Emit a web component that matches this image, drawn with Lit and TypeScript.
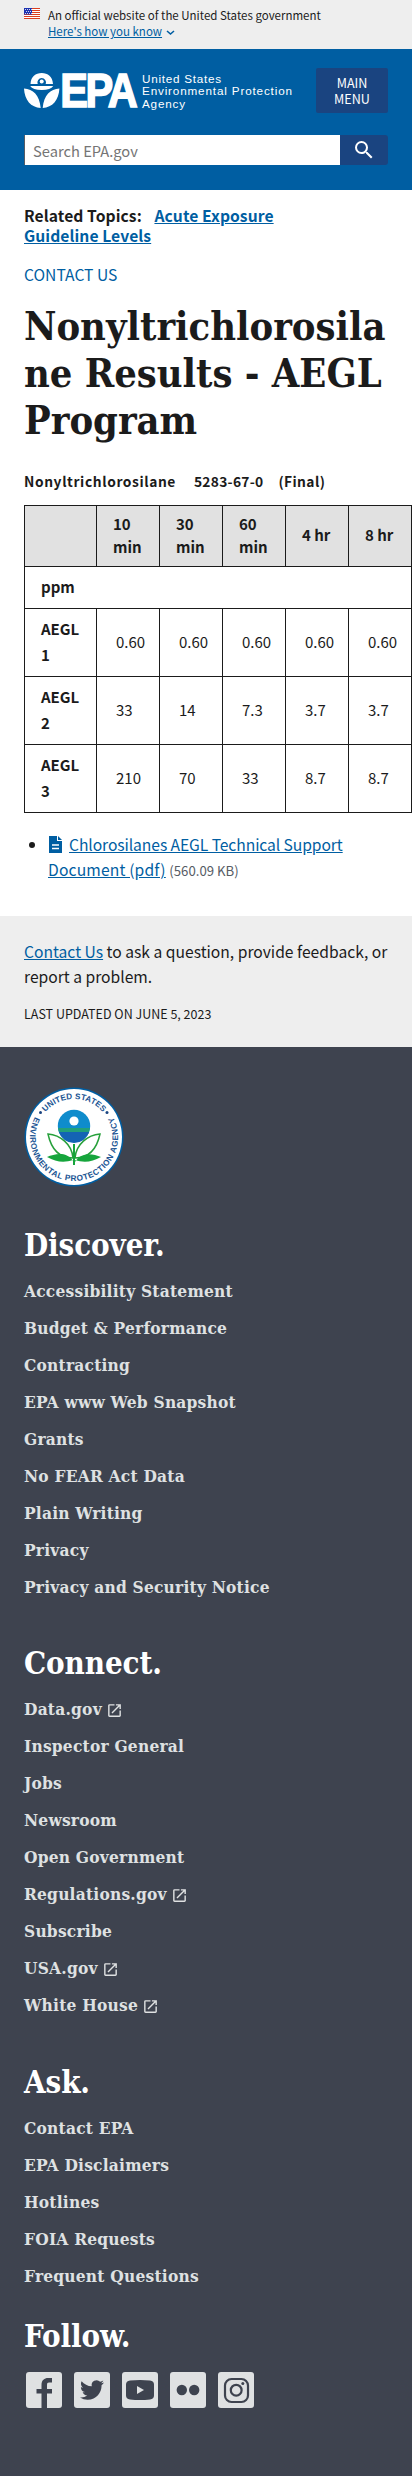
import { LitElement, html, css, svg } from "lit";
import { customElement, property } from "lit/decorators.js";

const DISCOVER = ["Accessibility Statement", "Budget & Performance", "Contracting", "EPA www Web Snapshot", "Grants", "No FEAR Act Data", "Plain Writing", "Privacy", "Privacy and Security Notice"];
const CONNECT = ["Data.gov", "Inspector General", "Jobs", "Newsroom", "Open Government", "Regulations.gov", "Subscribe", "USA.gov", "White House"];
const ASK = ["Contact EPA", "EPA Disclaimers", "Hotlines", "FOIA Requests", "Frequent Questions"];
const EXTERNAL = new Set(["Data.gov", "Regulations.gov", "USA.gov", "White House"]);
const LEVELS: [string, string[]][] = [
  ["1", ["0.60", "0.60", "0.60", "0.60", "0.60"]],
  ["2", ["33", "14", "7.3", "3.7", "3.7"]],
  ["3", ["210", "70", "33", "8.7", "8.7"]],
];

@customElement("footer-links")
export class FooterLinks extends LitElement {
  @property() heading = "";
  @property({ attribute: false }) items: string[] = [];
  static styles = css`
    :host { display: block; font-family: "DejaVu Serif Condensed", "DejaVu Serif", serif; font-stretch: condensed; font-weight: 700; }
    h2 { margin: 0; padding-top: 2px; font-size: 31px; line-height: 40px; color: #fff; letter-spacing: -0.1px; }
    ul { list-style: none; margin: 8px 0 0; padding: 0; }
    li { height: 37px; line-height: 37px; font-size: 17.2px; letter-spacing: .22px; color: #dfe1e2; white-space: nowrap; }
    a { color: inherit; text-decoration: none; }
    svg { width: 17px; height: 17px; fill: #dfe1e2; vertical-align: -4px; margin-left: 4px; }
  `;
  render() {
    return html`<h2>${this.heading}</h2>
      <ul>${this.items.map((t) => html`<li><a>${t}</a>${EXTERNAL.has(t) ? html`<svg viewBox="0 0 24 24"><path d="M19 19H5V5h7V3H5a2 2 0 0 0-2 2v14a2 2 0 0 0 2 2h14c1.1 0 2-.9 2-2v-7h-2v7zM14 3v2h3.59l-9.83 9.83 1.41 1.41L19 6.41V10h2V3h-7z"/></svg>` : ""}</li>`)}</ul>`;
  }
}

@customElement("app-root")
export class AppRoot extends LitElement {
  static styles = css`
    :host { display: block; width: 412px; height: 2476px; overflow: hidden; background: #fff; color: #1b1b1b; font-family: "Noto Sans CJK SC", "Noto Sans CJK JP", sans-serif; font-size: 15.65px; }
    * { box-sizing: border-box; }
    a { color: #005ea2; text-decoration: underline; }
    .banner { height: 49px; background: #eee; padding: 7px 24px 0; display: flex; gap: 8px; font-size: 11.5px; line-height: 16.4px; white-space: nowrap; }
    .flag { width: 16px; height: 11px; margin-top: 1px; display: block; }
    .chev { width: 9px; height: 6px; margin-left: 4px; vertical-align: 0; }
    .header { height: 141px; background: #005ea2; padding: 19px 24px 0; display: flex; flex-direction: column; gap: 22px; }
    .top { display: flex; justify-content: space-between; align-items: flex-start; }
    .logo { width: 272px; height: 42px; margin-top: 2px; overflow: visible; }
    .epa { letter-spacing: -2.8px; }
    .menu { width: 72px; height: 45px; background: #1a4480; color: #fff; text-align: center; font-size: 12.6px; line-height: 16px; padding-top: 7px; border-radius: 2px; }
    .search { display: flex; height: 30px; }
    .box { flex: 1; background: #fff; border: 1px solid #565c65; border-width: 0 0 0 1px; color: #757575; padding-left: 8px; line-height: 31px; font-size: 14.7px; }
    .go { width: 48px; background: #1a4480; display: flex; justify-content: center; align-items: center; border-radius: 0 3px 3px 0; }
    .go svg { width: 24px; height: 24px; fill: #fff; }
    .main { height: 726px; padding: 16px 24px 0; }
    .related { font-weight: 700; line-height: 20px; letter-spacing: .08px; }
    .related a { margin-left: 9px; }
    .related .cont { margin-left: 0; }
    .contact { margin-top: 19px; line-height: 20px; color: #005ea2; }
    h1 { margin: 18px 0 0; font-family: "DejaVu Serif Condensed", "DejaVu Serif", serif; font-stretch: condensed; font-size: 39.5px; line-height: 47px; font-weight: 700; white-space: nowrap; letter-spacing: -0.03px; }
    .cap { display: flex; gap: 18px; font-weight: 700; font-size: 13.8px; line-height: 20px; margin-top: 27px; letter-spacing: .6px; white-space: nowrap; }
    .cap .num { letter-spacing: .25px; margin-right: -3px; }
    .cap .fin { letter-spacing: .4px; }
    table { border-collapse: collapse; table-layout: fixed; width: 388px; margin-top: 14px; }
    th, td { border: 1px solid #1b1b1b; padding: 0 0 1px 16px; text-align: left; font-size: 15px; line-height: 22.5px; }
    thead th { background: #e1e1e1; height: 61px; }
    td { padding-left: 19px; font-weight: 400; }
    tbody tr { height: 68px; }
    tbody th { line-height: 26px; }
    tbody .unit { height: 42px; }
    .list { margin: 19px 0 0; padding: 0 0 0 24px; line-height: 25px; white-space: nowrap; }
    .list li::marker { font-size: 16px; }
    .doc { width: 15px; height: 18px; vertical-align: -3px; margin-right: 6px; }
    .list a { letter-spacing: -.08px; }
    .list .l2 { letter-spacing: .15px; }
    .size { font-size: 13.2px; color: #565c65; }
    .foot { height: 131px; background: #eee; padding: 23px 24px 0; line-height: 25px; white-space: nowrap; }
    .updated { font-size: 12.5px; line-height: 20px; margin-top: 15px; }
    .dark { height: 1429px; background: #3e434f; padding: 40px 24px 0; }
    .seal { width: 100px; height: 100px; display: block; }
    .dark footer-links { margin-top: 35.5px; }
    .dark .c { margin-top: 35px; }
    .dark .a { margin-top: 36px; }
    .dark .f { margin-top: 19px; }
    .social { display: flex; gap: 12px; margin: 16px 0 0 2px; }
    .social svg { width: 36px; height: 36px; }
  `;

  private seal() {
    return svg`<svg class="seal" viewBox="0 0 100 100">
      <defs>
        <path id="upper" d="M12 50a38 38 0 0 1 76 0"/>
        <path id="lower" d="M17.300 20.600 A44 44 0 1 0 82.700 20.600"/>
      </defs>
      <circle cx="50" cy="50" r="49.500" fill="#005ea2"/><circle cx="50" cy="50" r="48" fill="#fff"/>
      <g font-family="Liberation Sans" font-weight="700" font-size="8.200" fill="#205493">
        <text><textPath href="#upper" startOffset="50%" text-anchor="middle" textLength="65">UNITED STATES</textPath></text>
        <text><textPath href="#lower" startOffset="50%" text-anchor="middle" textLength="180">ENVIRONMENTAL PROTECTION AGENCY</textPath></text>
      </g>
      <circle cx="16.500" cy="25.500" r="1.500" fill="#1a4480"/><circle cx="83" cy="25.500" r="1.500" fill="#1a4480"/>
      <circle cx="50" cy="39" r="16.200" fill="#0f8ccc"/>
      <path d="M34 41h32q-1 5-2 6H36q-2-3-2-6z" fill="#22a07a"/>
      <path d="M34.800 45h30.400A16 16 0 0 1 34.800 45z" fill="#1464b4"/>
      <circle cx="50" cy="34" r="4.600" fill="#fff"/>
      <g fill="#fff" stroke="#27a03b" stroke-width="1.500"><path d="M49 71C35 71 27 61 24 47c12 1 24 10 25 24zM51 71c14 0 22-10 25-24-12 1-24 10-25 24z"/></g>
      <path d="M49 57h2v18c7-11 18-8 26-5-9 5-17 6-26 3v5h-2v-5c-9 3-17 2-26-3 8-3 19-6 26 4z" fill="#16a53c"/>
    </svg>`;
  }

  render() {
    return html`
      <div class="banner">
        <svg class="flag" viewBox="0 0 16 11"><rect width="16" height="11" fill="#fff"/><path d="M0 .5h16M0 2.5h16M0 4.5h16M0 6.5h16M0 8.5h16M0 10.5h16" stroke="#db3e1f" stroke-width="1"/><rect width="8" height="6.5" fill="#1e33b1"/><path d="M1 1.5h7M2 3.5h6M1 5.5h7" stroke="#fff" stroke-width=".8" stroke-dasharray="1 1"/></svg>
        <div>An official website of the United States government<br /><a>Here's how you know</a><svg class="chev" viewBox="0 0 9 6"><path d="M1 1l3.5 3L8 1" fill="none" stroke="#005ea2" stroke-width="1.6"/></svg></div>
      </div>
      <div class="header">
        <div class="top">
          <svg class="logo" viewBox="0 0 272 42" fill="#fff">
            <path fill-rule="evenodd" d="M6.500 14C7 6.500 11.500 3 17.700 3S28.500 6.500 29 14h-7.300a4.300 4.300 0 1 0-8 0z"/><circle cx="17.700" cy="11.500" r="2"/>
            <path d="M6.200 16h23q-2.500 4-11.500 4t-11.500-4z"/>
            <path d="M0 18.500c9 .5 15.500 6.500 16.700 19.500C7 37.500 .5 30 0 18.500zM35.400 18.500c-9 .5-15.500 6.500-16.700 19.500 9.700-.5 16.200-8 16.700-19.500z"/>
            <text class="epa" transform="translate(36.300 37.300) scale(.865 1)" font-family="Liberation Sans" font-weight="700" font-size="48" stroke="#fff" stroke-width="1.600">EPA</text>
            <g font-family="Liberation Sans" font-size="11.700"><text x="118" y="12.500" textLength="79">United States</text><text x="118" y="25" textLength="150">Environmental Protection</text><text x="118" y="37.500" textLength="43">Agency</text></g>
          </svg>
          <div class="menu">MAIN<br />MENU</div>
        </div>
        <div class="search"><div class="box">Search EPA.gov</div><div class="go"><svg viewBox="0 0 24 24"><path d="M15.500 14h-.790l-.280-.270A6.471 6.471 0 0 0 16 9.500 6.500 6.500 0 1 0 9.500 16c1.610 0 3.090-.590 4.230-1.570l.270.280v.790l5 4.990L20.490 19l-4.990-5zm-6 0C7.010 14 5 11.990 5 9.500S7.010 5 9.500 5 14 7.010 14 9.500 11.990 14 9.500 14z"/></svg></div></div>
      </div>
      <div class="main">
        <div class="related">Related Topics: <a>Acute Exposure</a><br /><a class="cont">Guideline Levels</a></div>
        <div class="contact">CONTACT US</div>
        <h1>Nonyltrichlorosila<br />ne Results - AEGL<br />Program</h1>
        <div class="cap"><span>Nonyltrichlorosilane</span><span class="num">5283-67-0</span><span class="fin">(Final)</span></div>
        <table>
          <colgroup><col style="width:72px" /><col /><col /><col /><col /><col /></colgroup>
          <thead><tr><th></th><th>10<br />min</th><th>30<br />min</th><th>60<br />min</th><th>4 hr</th><th>8 hr</th></tr></thead>
          <tbody><tr class="unit"><th colspan="6">ppm</th></tr>
          ${LEVELS.map(([n, v]) => html`<tr><th>AEGL<br />${n}</th>${v.map((x) => html`<td>${x}</td>`)}</tr>`)}</tbody>
        </table>
        <ul class="list"><li><svg class="doc" viewBox="0 0 15 18"><path d="M1 0h8v5h5v12H1z" fill="#005ea2"/><path d="M10 0l4 4h-4z" fill="#005ea2"/><path d="M4 9h7M4 12.500h7" stroke="#fff" stroke-width="1.300"/></svg><a>Chlorosilanes AEGL Technical Support</a><br /><a class="l2">Document (pdf)</a> <span class="size">(560.09 KB)</span></li></ul>
      </div>
      <div class="foot"><a>Contact Us</a> to ask a question, provide feedback, or<br />report a problem.<div class="updated">LAST UPDATED ON JUNE 5, 2023</div></div>
      <div class="dark">
        ${this.seal()}
        <footer-links heading="Discover." .items=${DISCOVER}></footer-links>
        <footer-links class="c" heading="Connect." .items=${CONNECT}></footer-links>
        <footer-links class="a" heading="Ask." .items=${ASK}></footer-links>
        <footer-links class="f" heading="Follow."></footer-links>
        <div class="social">
          ${[
            svg`<path d="M15.500 36V21.500h-5V17h5v-4c0-5 3-7 6.500-7h4v4.500h-3c-1.500 0-2 .8-2 2.500v4h5v4.500h-5V36z"/>`,
            svg`<path transform="translate(6 6)" d="M23.953 4.570a10 10 0 01-2.825.775 4.958 4.958 0 002.163-2.723c-.951.555-2.005.959-3.127 1.184a4.920 4.920 0 00-8.384 4.482C7.690 8.095 4.067 6.130 1.640 3.162a4.822 4.822 0 00-.666 2.475c0 1.710.870 3.213 2.188 4.096a4.904 4.904 0 01-2.228-.616v.060a4.923 4.923 0 003.946 4.827 4.996 4.996 0 01-2.212.085 4.936 4.936 0 004.604 3.417 9.867 9.867 0 01-6.102 2.105c-.390 0-.779-.023-1.170-.067a13.995 13.995 0 007.557 2.209c9.053 0 13.998-7.496 13.998-13.985 0-.210 0-.420-.015-.630A9.935 9.935 0 0024 4.590z"/>`,
            svg`<path fill-rule="evenodd" d="M8 8.500q10-1 20 0 4 .5 4 4v11q0 3.500-4 4-10 1-20 0-4-.5-4-4v-11q0-3.500 4-4zM15 14v8l7-4z"/>`,
            svg`<circle cx="11.800" cy="18" r="5.200"/><circle cx="24.200" cy="18" r="5.200"/>`,
            svg`<g fill="none" stroke="#3e434f" stroke-width="2.200"><rect x="7" y="7" width="23" height="23" rx="6.500"/><circle cx="18.200" cy="18.200" r="5.400"/></g><circle cx="24.800" cy="11.500" r="1.500"/>`,
          ].map((g) => html`<svg viewBox="0 0 36 36" fill="#3e434f"><rect width="36" height="36" rx="3" fill="#dfe1e2"/>${g}</svg>`)}
        </div>
      </div>`;
  }
}
